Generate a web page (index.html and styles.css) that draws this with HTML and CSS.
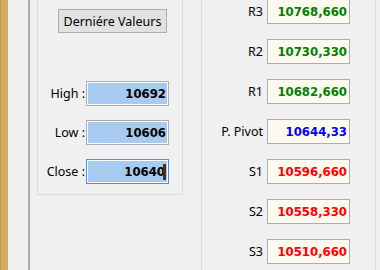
FILE: index.html
```html
<!DOCTYPE html>
<html lang="fr">
<head>
    <meta charset="UTF-8">
    <title>Points Pivot</title>
    <link rel="stylesheet" href="styles.css">
</head>
<body>
    <div class="window">
        <div class="strip"></div>
        <div class="gutter"></div>
        <div class="divider"></div>
        <div class="content">
            <div class="group">
                <button class="btn">Derniére Valeurs</button>
                <div class="form">
                    <label>High :</label>
                    <div class="input sel">10692</div>
                    <label>Low :</label>
                    <div class="input sel">10606</div>
                    <label>Close :</label>
                    <div class="input sel focus">10640<span class="caret"></span></div>
                </div>
            </div>

            <div class="levels">
                <label>R3</label>
                <div class="value green">10768,660</div>
                <label>R2</label>
                <div class="value green">10730,330</div>
                <label>R1</label>
                <div class="value green">10682,660</div>
                <label>P. Pivot</label>
                <div class="value blue">10644,33</div>
                <label>S1</label>
                <div class="value red">10596,660</div>
                <label>S2</label>
                <div class="value red">10558,330</div>
                <label>S3</label>
                <div class="value red">10510,660</div>
            </div>
        </div>
    </div>
</body>
</html>
```

FILE: styles.css
```css
body {
    margin: 0;
    background-color: #f0f0f0;
    font-family: "Noto Sans", sans-serif;
    font-size: 12.5px;
    color: #000;
}
.window {
    display: flex;
    width: 380px;
    height: 270px;
    overflow: hidden;
}
.strip {
    width: 7px;
    background-color: #d0b060;
    border-left: 1px solid #bd9e4e;
}
.gutter {
    width: 20px;
}
.divider {
    width: 2px;
    background-color: #adadad;
}
.content {
    flex: 1;
    display: flex;
    padding-left: 7px;
}
.group {
    box-sizing: border-box;
    width: 146px;
    height: 195px;
    border: 1px solid #dcdcdc;
    border-top: none;
    padding-top: 9px;
}
.btn {
    display: block;
    box-sizing: border-box;
    width: 109px;
    height: 24px;
    margin-left: 20px;
    padding: 0;
    background-color: #e1e1e1;
    border: 1px solid #adadad;
    font-family: "Noto Sans", sans-serif;
    font-size: 12.5px;
    color: #000;
}
.form {
    display: grid;
    grid-template-columns: 48px 83px;
    grid-auto-rows: 25px;
    row-gap: 14px;
    margin-top: 48px;
}
label {
    display: flex;
    align-items: center;
    justify-content: flex-end;
    white-space: nowrap;
    padding-bottom: 1px;
}
.form label {
    padding-right: 1px;
}
.input, .value {
    box-sizing: border-box;
    display: flex;
    align-items: center;
    justify-content: flex-end;
    padding-right: 2px;
    border: 1px solid #abadb3;
    font-family: "DejaVu Sans Condensed", "DejaVu Sans", sans-serif;
    font-weight: bold;
    font-size: 13px;
}
.sel {
    background-color: #a6caf0;
    box-shadow: inset 0 0 0 1px #fff;
}
.focus {
    border-color: #3c96ec;
}
.caret {
    display: inline-block;
    width: 3px;
    height: 16px;
    margin-left: -2px;
    background-color: #4b300e;
}
.levels {
    box-sizing: border-box;
    width: 175px;
    margin-left: 18px;
    border-left: 1px solid #dcdcdc;
    border-right: 1px solid #dcdcdc;
    display: grid;
    grid-template-columns: 65px 83px;
    grid-auto-rows: 25px;
    row-gap: 15px;
    align-content: start;
    margin-top: -1px;
}
.levels label {
    padding-right: 4px;
}
.value {
    background-color: #fffaf0;
}
.green {
    color: #008000;
}
.blue {
    color: #0000ff;
}
.red {
    color: #ff0000;
}
```
